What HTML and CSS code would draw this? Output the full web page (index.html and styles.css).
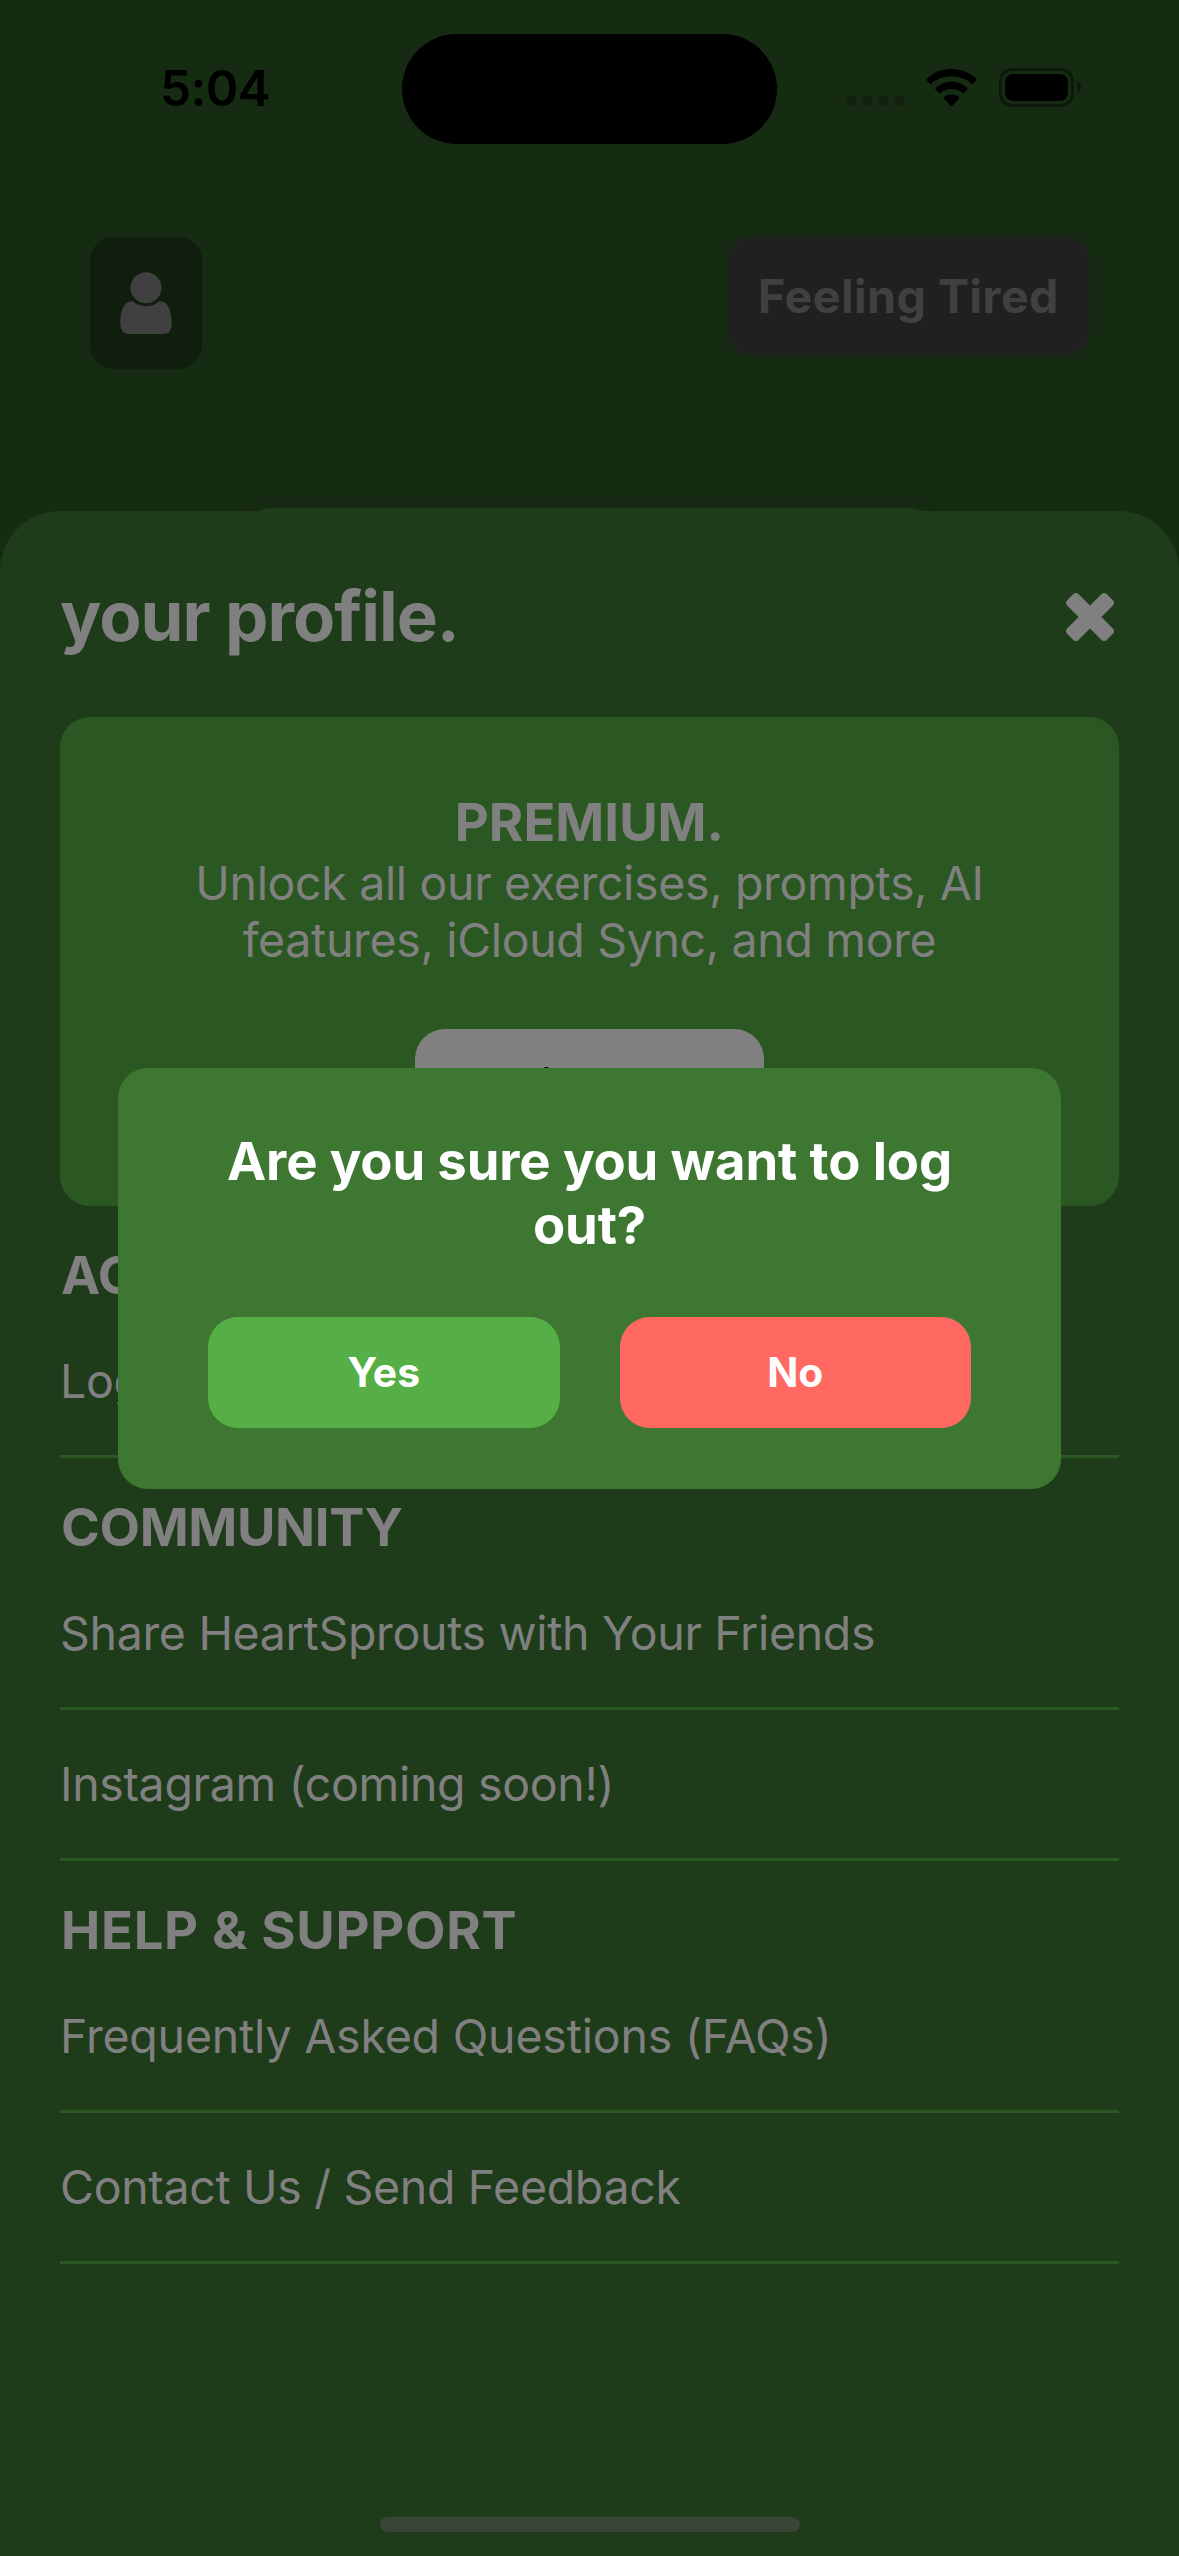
FILE: index.html
```html
<!DOCTYPE html>
<html lang="en">
<head>
<meta charset="utf-8">
<title>Your profile</title>
<link rel="stylesheet" href="styles.css">
</head>
<body>
<div class="screen">
  <header class="status">
    <span class="time">5:04</span>
    <span class="island"></span>
    <span class="indicators">
      <svg class="cell" width="58" height="10" viewBox="0 0 58 10"><g fill="#11210e"><rect width="10" height="10" rx="3"/><rect x="16" width="10" height="10" rx="3"/><rect x="32" width="10" height="10" rx="3"/><rect x="48" width="10" height="10" rx="3"/></g></svg>
      <svg class="wifi" width="51" height="38" viewBox="0 0 51 38"><path d="M25.500 0C35.500 0 44.500 4 51 10.500L46.500 15.200Q37.500 7.300 25.500 7.300T4.500 15.200L0 10.500C6.500 4 15.500 0 25.500 0ZM25.500 12.800C32 12.800 37.600 15.400 42 19.600L37.300 24.600Q32.300 20 25.500 20T13.700 24.600L9 19.600C13.400 15.400 19 12.800 25.500 12.800ZM25.500 25.500C28.500 25.500 31 26.500 33 28.300Q33.600 29 33 29.700L25.500 37.500L18 29.700Q17.400 29 18 28.300C20 26.500 22.500 25.500 25.500 25.500Z"/></svg>
      <svg class="battery" width="83" height="39" viewBox="0 0 83 39"><rect x="1.500" y="1.500" width="72" height="36" rx="11.500" fill="none" stroke="#0d190b" stroke-width="3"/><rect x="6" y="6" width="63" height="27" rx="8"/><path d="M78 13.500Q82 15.500 82 19.500T78 25.500Z" fill="#0d190b"/></svg>
    </span>
  </header>

  <div class="topbar">
    <div class="avatar">
      <svg width="52" height="62" viewBox="0 0 52 62"><circle cx="26" cy="15.700" r="15.500"/><path d="M12.500 29Q18 34.200 26 34.200T39.500 29C49 29 51.700 41 51.700 52Q51.700 62 43 62H9Q0.300 62 0.300 52C0.300 41 3 29 12.500 29Z"/></svg>
    </div>
    <div class="mood">Feeling Tired</div>
  </div>

  <div class="backcard"></div>

  <main class="sheet">
    <div class="sheet-head">
      <h1 class="title">your profile.</h1>
      <svg class="close" width="48" height="48" viewBox="0 0 48 48"><g fill="#808080"><rect x="-4" y="16" width="56" height="16" rx="4" transform="rotate(45 24 24)"/><rect x="-4" y="16" width="56" height="16" rx="4" transform="rotate(-45 24 24)"/></g></svg>
    </div>
    <section class="premium">
      <h2 class="premium-title">PREMIUM.</h2>
      <p class="premium-copy">Unlock all our exercises, prompts, AI<br>features, iCloud Sync, and more</p>
      <div class="join">Join Now</div>
    </section>
    <h2 class="group">ACCOUNT</h2>
    <div class="row">Log Out</div>
    <h2 class="group">COMMUNITY</h2>
    <div class="row">Share HeartSprouts with Your Friends</div>
    <div class="row">Instagram (coming soon!)</div>
    <h2 class="group help">HELP &amp; SUPPORT</h2>
    <div class="row faq">Frequently Asked Questions (FAQs)</div>
    <div class="row">Contact Us / Send Feedback</div>
  </main>

  <div class="overlay">
    <div class="dialog">
      <p class="question">Are you sure you want to log<br>out?</p>
      <div class="actions">
        <button class="btn yes">Yes</button>
        <button class="btn no">No</button>
      </div>
    </div>
  </div>
  <div class="home"></div>
</div>
</body>
</html>
```

FILE: styles.css
```css
* { box-sizing: border-box; }
body, h1, h2, p { margin: 0; }
body { background: #152b12; font-family: Inter, "Liberation Sans", sans-serif; }
svg { display: block; }
.screen { position: relative; width: 1179px; height: 2556px; overflow: hidden; background: #152b12; }

.status { display: grid; grid-template-columns: 402px 375px 402px; height: 144px; padding-top: 34px; }
.time { align-self: center; padding: 0 0 2px 28px; text-align: center; font-size: 49.500px; font-weight: 600; letter-spacing: -.6px; line-height: 60px; }
.island { height: 110px; border-radius: 55px; background: #000; }
.indicators { display: flex; align-items: center; height: 107px; padding-left: 69px; }
.cell { margin-top: 27px; }
.wifi { margin-left: 22px; }
.battery { margin-left: 22px; }

.topbar { display: flex; justify-content: space-between; align-items: flex-start; padding: 93px 90px 0; }
.avatar { display: flex; align-items: center; justify-content: center; width: 112px; height: 132px; border-radius: 24px; background: #0f1e0d; fill: #404040; }
.mood { width: 361px; height: 118px; border-radius: 24px; background: #202020; color: #404040; font-size: 46.500px; font-weight: 700; letter-spacing: .5px; line-height: 118px; text-align: center; white-space: nowrap; }

.backcard { width: 707px; height: 60px; margin: 139px auto 0; border-radius: 36px 36px 0 0; background: #1f3b1b; box-shadow: 0 0 20px rgba(40, 32, 24, .25); }
.sheet { position: relative; height: 2045px; margin-top: -57px; padding: 0 60px; border-radius: 60px 60px 0 0; background: #1e3b1a; color: #808080; }
.sheet-head { display: flex; justify-content: space-between; align-items: center; height: 206px; padding: 6px 5px 0 0; }
.title { margin-top: -3px; font-size: 69px; font-weight: 700; letter-spacing: -1px; line-height: 84px; }
.premium { height: 489px; padding-top: 73px; border-radius: 30px; background: #2b5822; text-align: center; }
.premium-title { font-size: 52.600px; font-weight: 700; line-height: 64px; }
.premium-copy { padding-top: 1px; font-size: 46.500px; letter-spacing: -.350px; line-height: 57px; white-space: nowrap; }
.join { width: 349px; height: 102px; margin: 60px auto 0; padding-right: 2px; border-radius: 30px; background: #808080; color: #000; font-size: 45px; font-weight: 700; line-height: 113px; }
.group { height: 101px; padding: 37px 0 0 1px; font-size: 52.600px; font-weight: 700; letter-spacing: -.360px; line-height: 64px; }
.help { letter-spacing: .700px; }
.row { height: 151px; border-bottom: 3px solid #2b5822; font-size: 46.500px; letter-spacing: -.330px; line-height: 148px; white-space: nowrap; }
.faq { letter-spacing: -.200px; }

.overlay { position: absolute; inset: 0; display: flex; align-items: flex-start; justify-content: center; padding-top: 1068px; }
.dialog { width: 943px; height: 421px; padding: 62px 90px; border-radius: 30px; background: #3e7732; }
.question { color: #fff; font-size: 52.600px; font-weight: 700; letter-spacing: -.120px; line-height: 63.500px; text-align: center; white-space: nowrap; }
.actions { display: grid; grid-template-columns: 1fr 1fr; gap: 60px; margin-top: 60px; }
.btn { height: 111px; padding: 0; border: 0; border-radius: 30px; color: #fff; font: 700 40.800px/111px Inter, "Liberation Sans", sans-serif; }
.yes { background: #56ae46; }
.no { background: #ff6961; }
.home { position: absolute; left: 380px; bottom: 24px; width: 420px; height: 15px; border-radius: 8px; background: #3b4438; }
```
